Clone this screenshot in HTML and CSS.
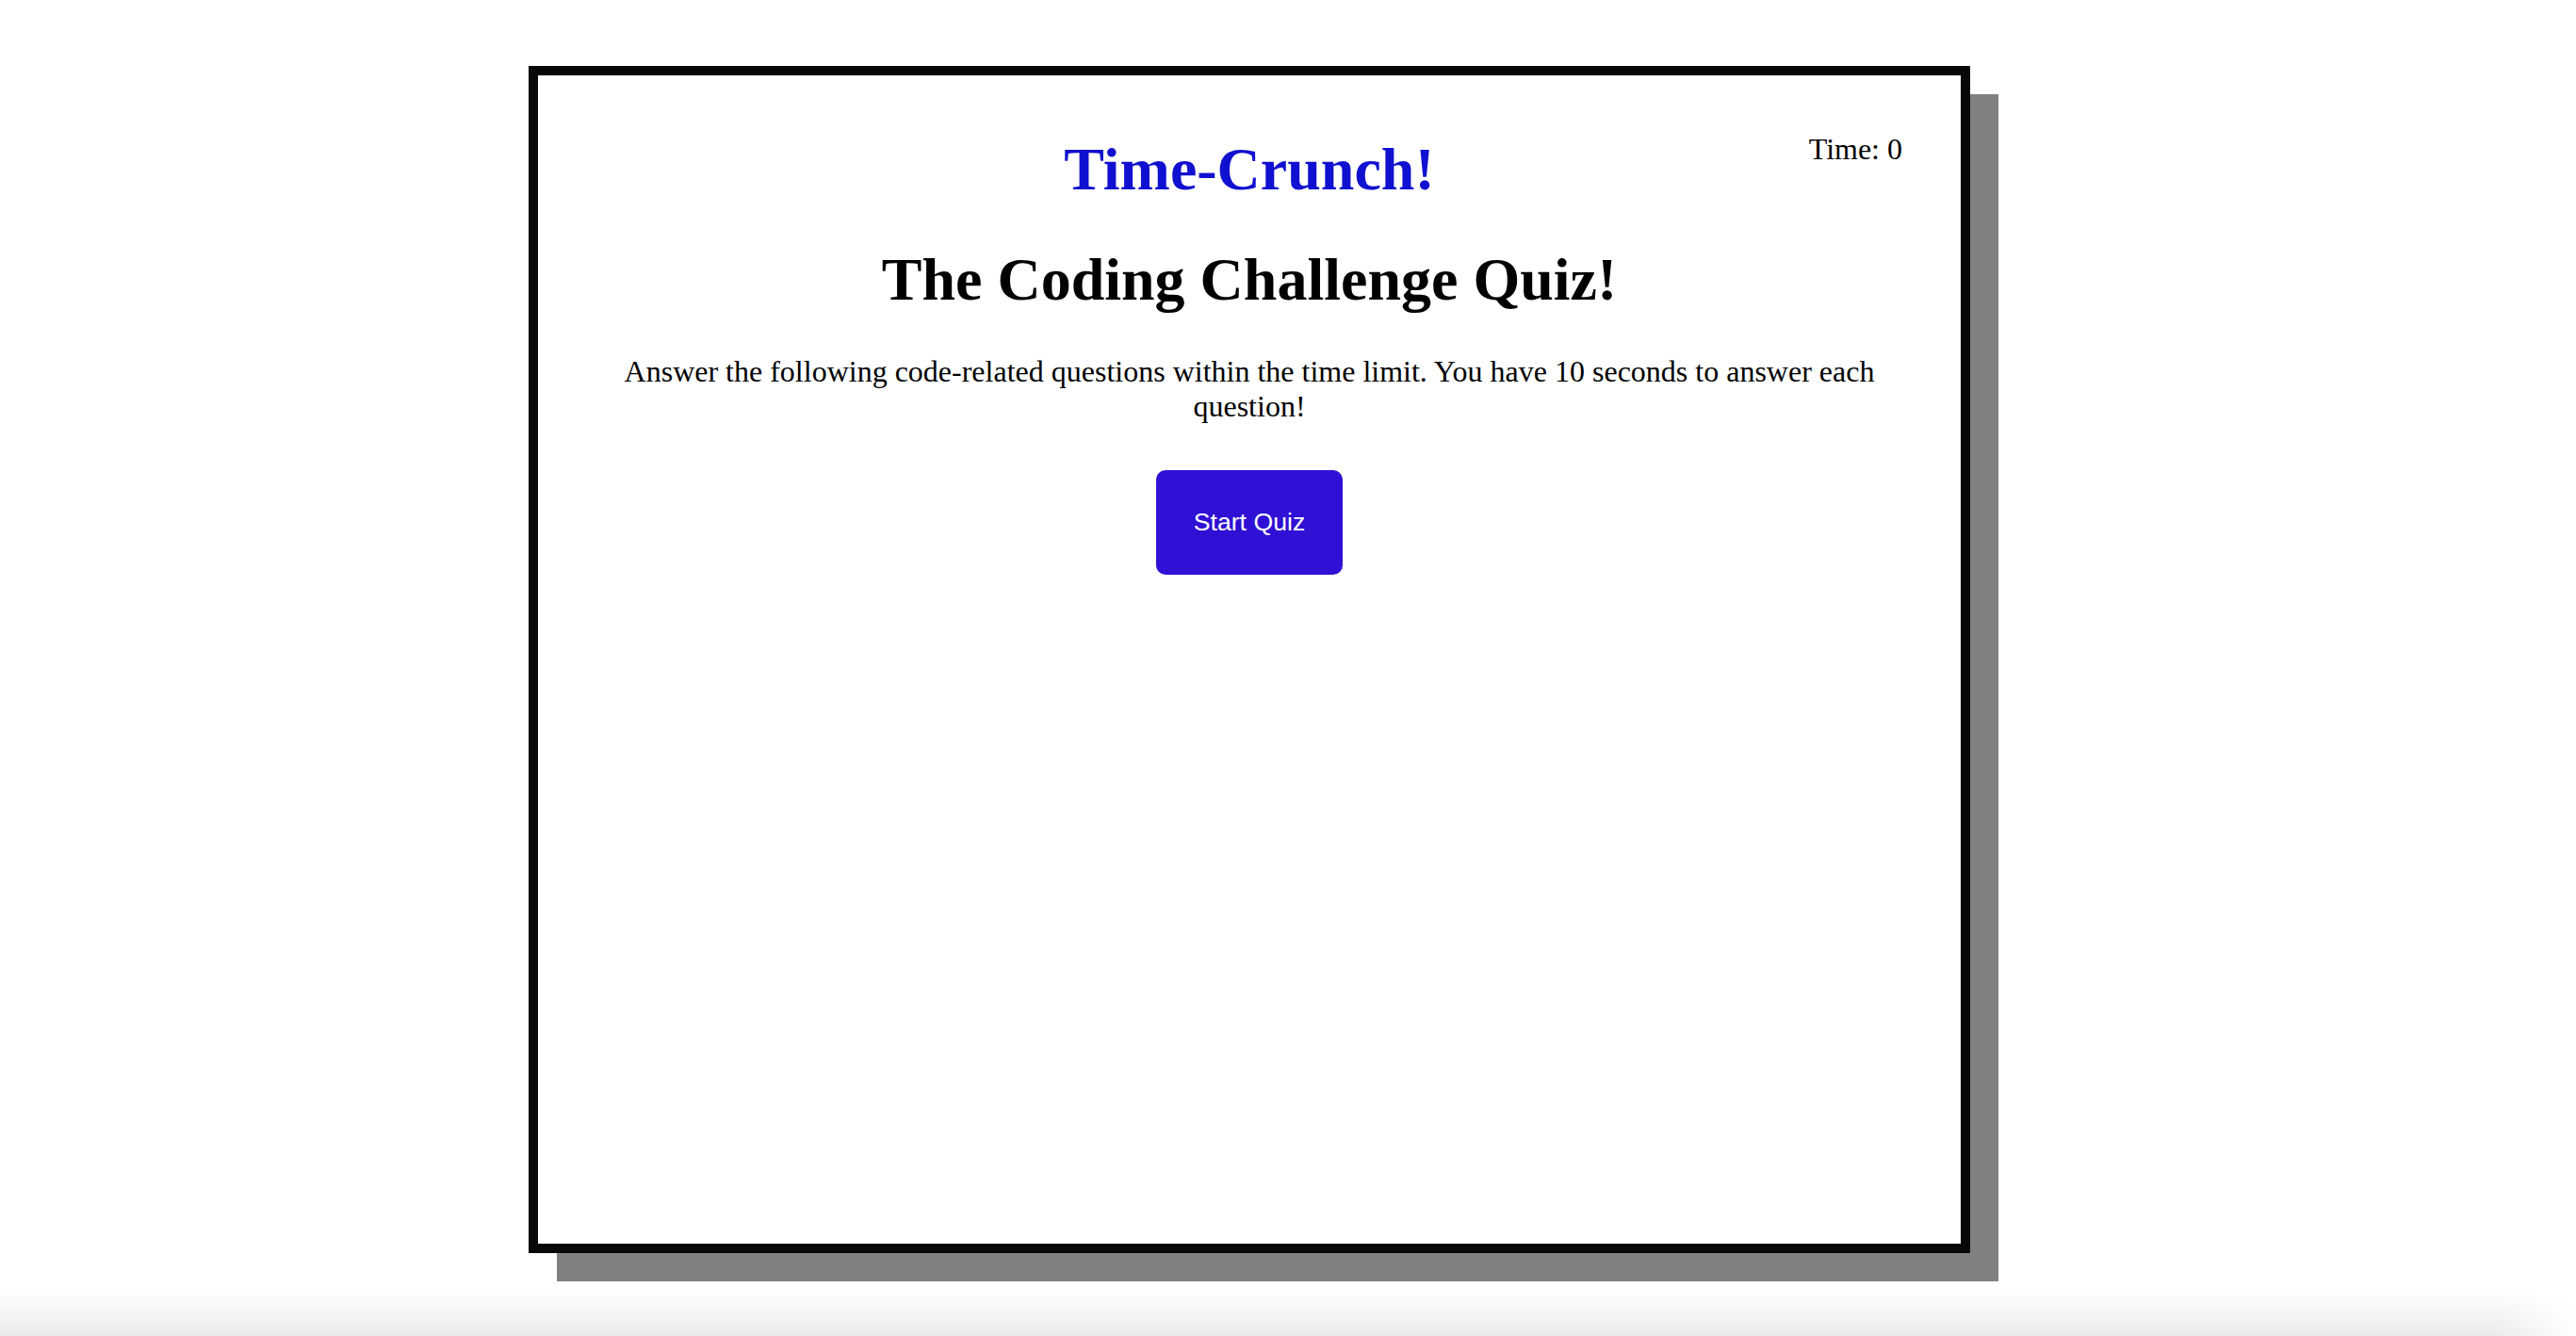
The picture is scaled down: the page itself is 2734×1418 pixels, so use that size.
FILE: index.html
```html
<!DOCTYPE html>
<html lang="en">
<head>
<meta charset="utf-8">
<title>Time-Crunch! Coding Quiz</title>
<link rel="stylesheet" href="styles.css">
</head>
<body>
  <main class="quiz-card">
    <header class="card-header">
      <span class="spacer"></span>
      <h1 class="brand">Time-Crunch!</h1>
      <div class="timer">Time: <span class="timer-value">0</span></div>
    </header>
    <section class="intro">
      <h1 class="quiz-title">The Coding Challenge Quiz!</h1>
      <p class="quiz-desc">Answer the following code-related questions within the time limit. You have 10 seconds to answer each question!</p>
      <button class="start-btn" type="button">Start Quiz</button>
    </section>
  </main>
  <div class="bottom-fade"></div>
</body>
</html>
```

FILE: styles.css
```css
html, body {
  margin: 0;
  padding: 0;
  background: #ffffff;
}

body {
  font-family: "Liberation Serif", "Times New Roman", serif;
  font-size: 32px;
  color: #000000;
  padding-bottom: 40px;
}

.quiz-card {
  box-sizing: border-box;
  width: 1530px;
  height: 1260px;
  margin: 70px 0 0 561px;
  border: 10px solid #080808;
  box-shadow: 30px 30px 0 #808080;
  background: #ffffff;
  display: flex;
  flex-direction: column;
}

.card-header {
  display: grid;
  grid-template-columns: 1fr auto 1fr;
  margin-top: 60px;
}

.brand {
  margin: 3px 0 0 0;
  font-size: 64px;
  font-weight: bold;
  color: #1010d0;
  text-align: center;
}

.timer {
  justify-self: end;
  align-self: start;
  padding-right: 62px;
  font-size: 32px;
}

.intro {
  display: flex;
  flex-direction: column;
  align-items: center;
  text-align: center;
}

.quiz-title {
  margin: 43px 0 0 0;
  font-size: 64px;
  font-weight: bold;
}

.quiz-desc {
  margin: 42px 85px 0 85px;
  font-size: 32px;
}

.start-btn {
  margin-top: 49px;
  padding: 40px;
  border: none;
  border-radius: 10px;
  background: #3010d4;
  color: #ffffff;
  font-family: "Liberation Sans", Arial, sans-serif;
  font-size: 26.67px;
  line-height: 1.15;
  cursor: pointer;
}

.bottom-fade {
  position: fixed;
  left: 0;
  right: 0;
  bottom: 0;
  height: 48px;
  background: linear-gradient(to bottom, rgba(0,0,0,0), rgba(0,0,0,0.08));
  -webkit-mask-image: linear-gradient(to right, #000 97%, transparent 100%);
  mask-image: linear-gradient(to right, #000 97%, transparent 100%);
  pointer-events: none;
}
```
